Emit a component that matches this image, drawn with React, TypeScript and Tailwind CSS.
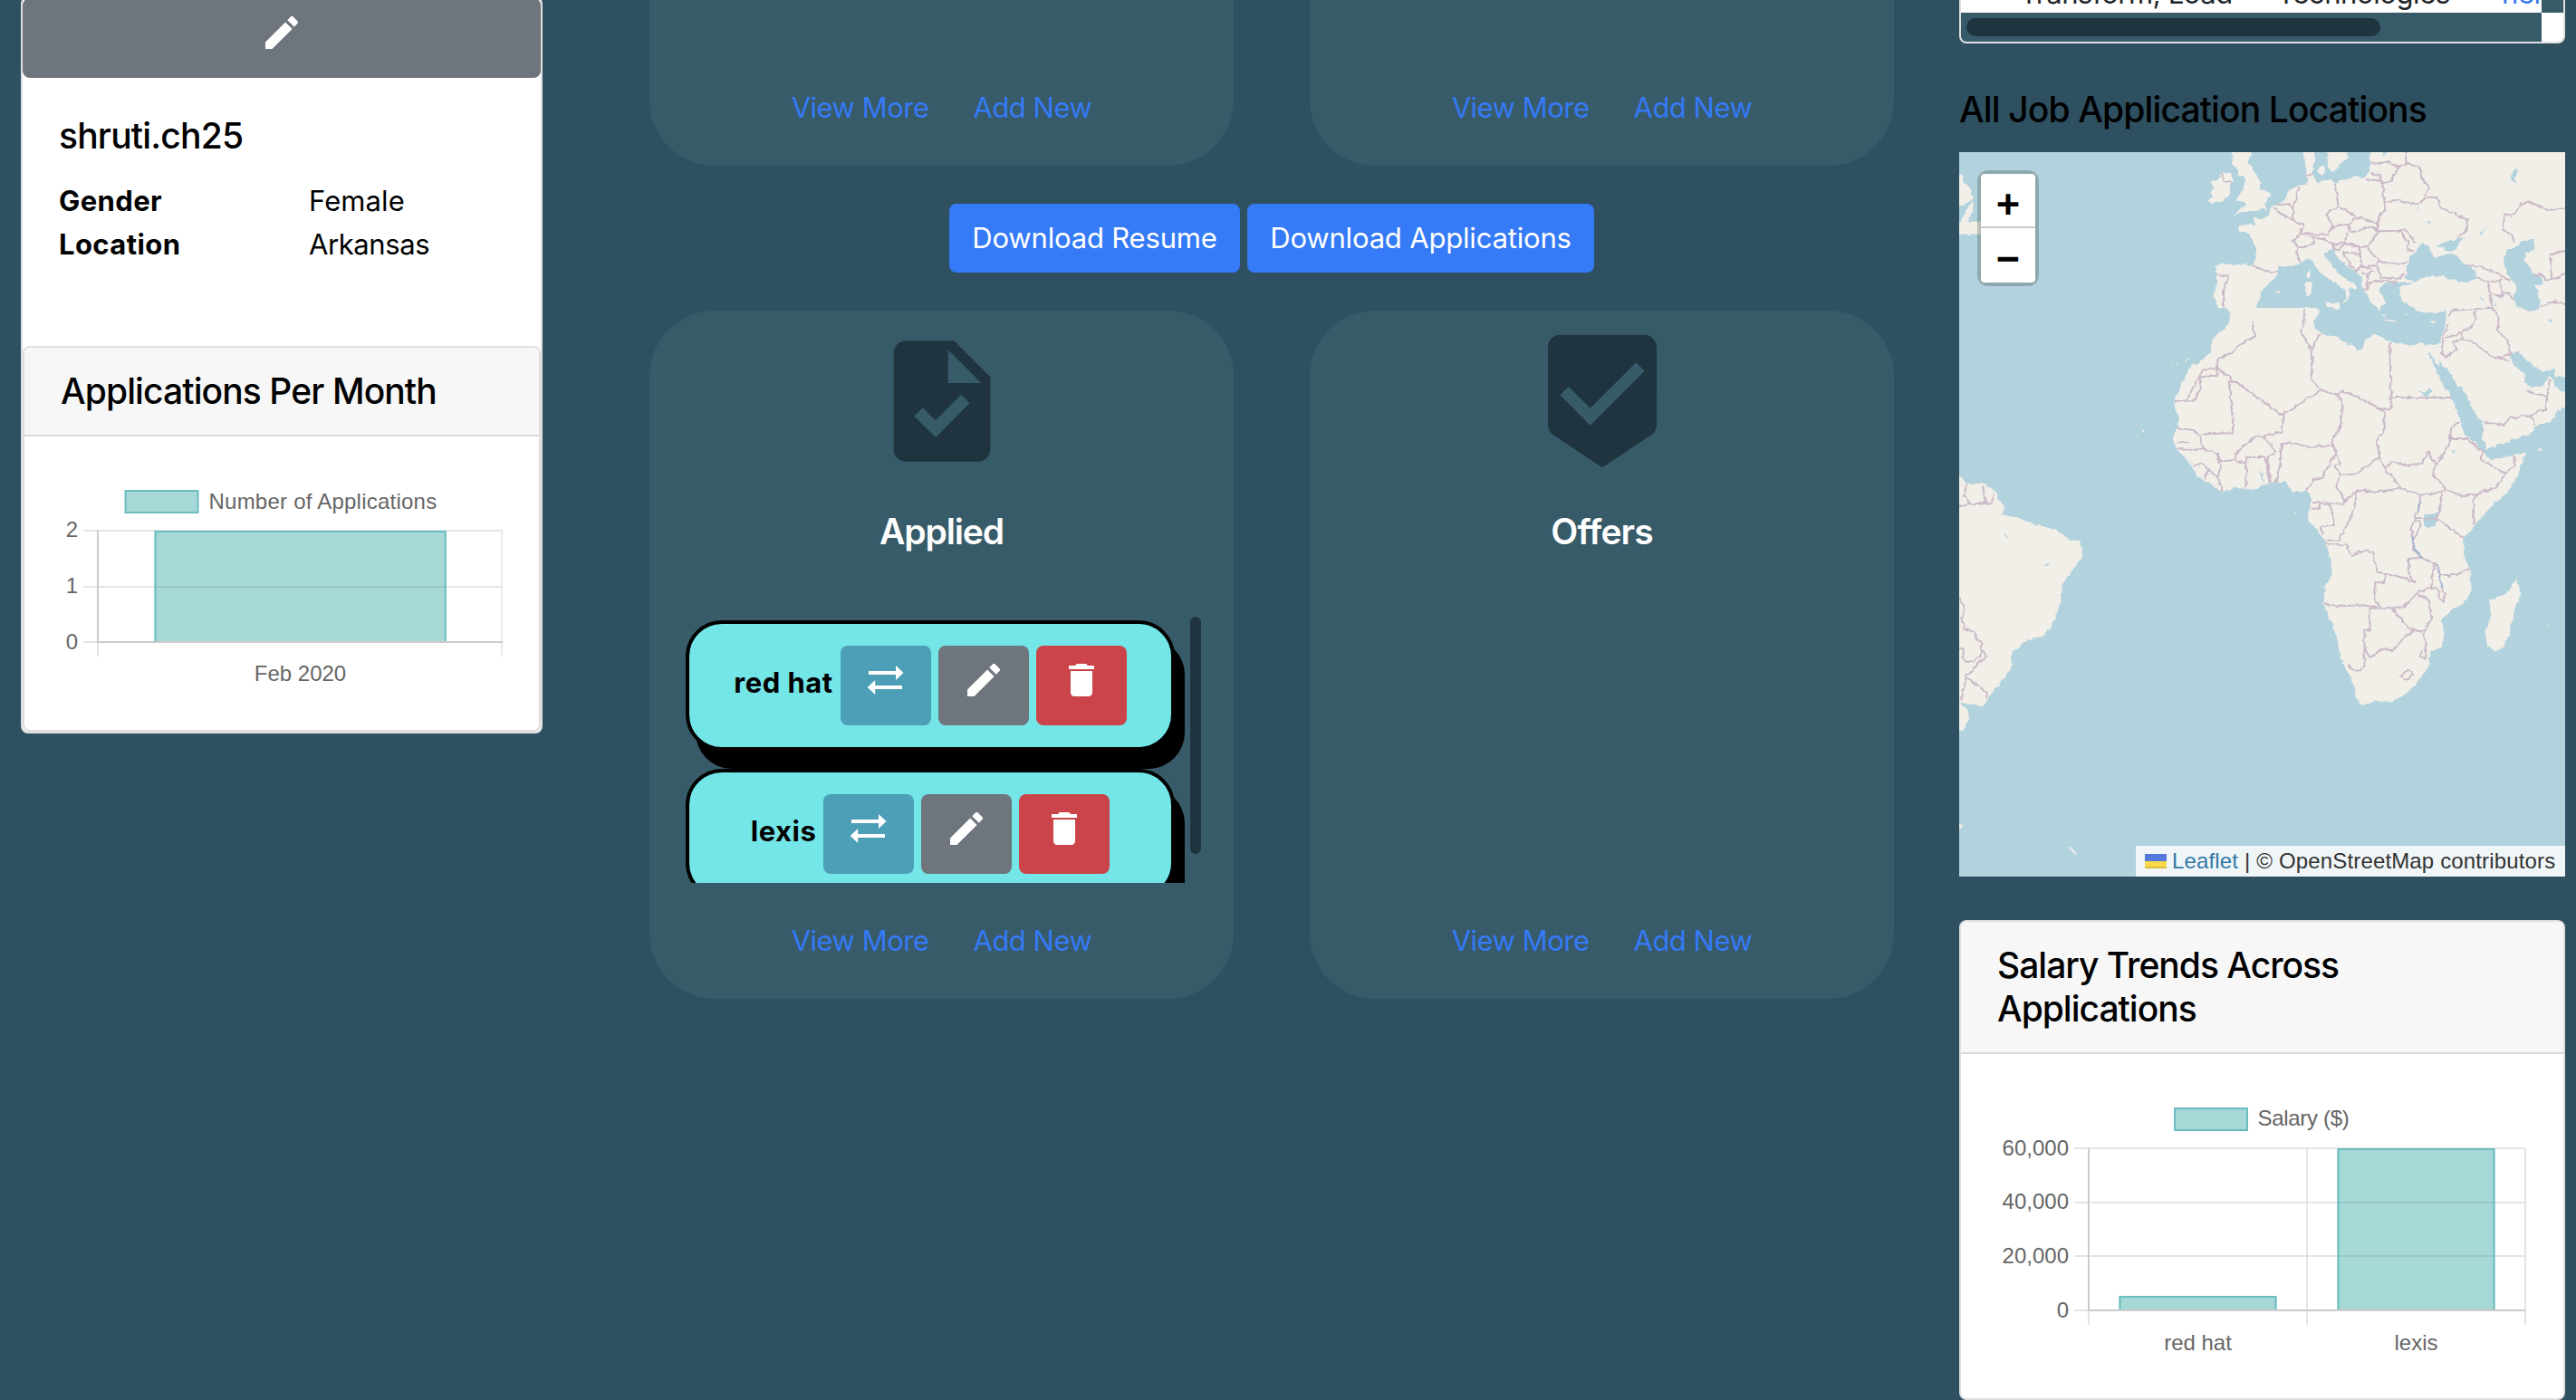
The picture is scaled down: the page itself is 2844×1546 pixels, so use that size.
import React from "react";
import { MdBeenhere, MdDelete, MdEdit, MdTask } from "react-icons/md";

function SwapIcon() {
  return (
    <svg viewBox="0 0 48 48" className="size-12 fill-white">
      <path d="M5 14H35V8L43.5 16 35 24V18H5Z" />
      <path d="M42 30H12.2V24L3.7 32 12.2 40V34H42Z" />
    </svg>
  );
}

function CardLinks() {
  return (
    <div className="flex justify-center gap-[49px] text-[31px] leading-[48px] tracking-[-0.5px] text-[#357af6]">
      <a>View More</a>
      <a>Add New</a>
    </div>
  );
}

function JobItem({ name }: { name: string }) {
  return (
    <div className="mb-5 flex h-36 w-[540px] items-start justify-center gap-2 rounded-[40px] border-4 border-black bg-[#74e6e8] pt-6 shadow-[11px_20px_0_0_#000]">
      <span className="pt-[17px] text-[31px] font-bold leading-[48px] tracking-[0.5px]">{name}</span>
      <button className="flex h-[88px] w-[100px] justify-center rounded-lg bg-[#4c9fb6] pt-[14px]">
        <SwapIcon />
      </button>
      <button className="flex h-[88px] w-[100px] justify-center rounded-lg bg-[#6e757d] pt-[14px] text-white">
        <MdEdit className="size-12" />
      </button>
      <button className="flex h-[88px] w-[100px] justify-center rounded-lg bg-[#ca444a] pt-[14px] text-white">
        <MdDelete className="size-12" />
      </button>
    </div>
  );
}

const chartText = "fill-[#666666] font-['Liberation_Sans',Arial,sans-serif] text-[24px]";

function ApplicationsChart() {
  return (
    <svg viewBox="0 0 568 324" className="block h-[324px] w-[568px]">
      <rect x="111.5" y="60" width="80" height="24" fill="#a6d8d7" stroke="#6cbdbf" strokeWidth="2" />
      <text x="203.5" y="79.5" letterSpacing="0.23" className={chartText}>Number of Applications</text>
      <g fill="#e4e4e4">
        <rect x="65" y="103" width="463" height="2" />
        <rect x="65" y="165" width="463" height="2" />
        <rect x="65" y="226" width="16" height="2" />
        <rect x="526.5" y="104" width="1.5" height="139" />
        <rect x="80" y="228" width="2" height="15" />
      </g>
      <rect x="143.5" y="104" width="322" height="123" fill="#a6d8d7" />
      <rect x="143.5" y="165" width="322" height="2" fill="#96c7c6" />
      <path d="M144.5 227V105H464.8V227" fill="none" stroke="#6cbdbf" strokeWidth="2" />
      <rect x="80" y="104" width="2" height="124" fill="#cccccc" />
      <rect x="80" y="226" width="448" height="2" fill="#cccccc" />
      <g textAnchor="end" className={chartText}>
        <text x="59" y="111">2</text>
        <text x="59" y="173">1</text>
        <text x="59" y="235">0</text>
      </g>
      <text x="304.5" y="270" textAnchor="middle" className={chartText}>Feb 2020</text>
    </svg>
  );
}

function SalaryChart() {
  return (
    <svg viewBox="0 0 665 380" className="block h-[380px] w-[665px]">
      <rect x="236" y="60" width="80" height="24" fill="#a6d8d7" stroke="#6cbdbf" strokeWidth="2" />
      <text x="327.5" y="79" letterSpacing="-0.3" className={chartText}>Salary ($)</text>
      <g fill="#e4e4e4">
        <rect x="125" y="103" width="498" height="2" />
        <rect x="125" y="163" width="498" height="2" />
        <rect x="125" y="222" width="498" height="2" />
        <rect x="125" y="282" width="16" height="2" />
        <rect x="622" y="104" width="2" height="195" />
        <rect x="381" y="104" width="2" height="195" />
        <rect x="140" y="284" width="2" height="15" />
      </g>
      <rect x="174.5" y="267" width="174" height="16" fill="#a6d8d7" />
      <path d="M175.5 283V268H347.5V283" fill="none" stroke="#6cbdbf" strokeWidth="2" />
      <rect x="415.5" y="104" width="174" height="179" fill="#a6d8d7" />
      <rect x="415.5" y="163" width="174" height="2" fill="#96c7c6" />
      <rect x="415.5" y="222" width="174" height="2" fill="#96c7c6" />
      <path d="M416.5 283V105H588.5V283" fill="none" stroke="#6cbdbf" strokeWidth="2" />
      <rect x="140" y="104" width="2" height="180" fill="#cccccc" />
      <rect x="140" y="282" width="483" height="2" fill="#cccccc" />
      <g textAnchor="end" className={chartText}>
        <text x="119" y="111.5">60,000</text>
        <text x="119" y="170.5">40,000</text>
        <text x="119" y="230.5">20,000</text>
        <text x="119" y="290.5">0</text>
      </g>
      <g textAnchor="middle" className={chartText}>
        <text x="261.5" y="326.5">red hat</text>
        <text x="502.5" y="326.5">lexis</text>
      </g>
    </svg>
  );
}

const north = "translate(237 0) scale(.33333)";
const south = "translate(-42.94 182) scale(.4617 .33333)";

function WorldMap() {
  return (
    <svg viewBox="0 0 669 800" className="block h-[800px] w-[669px] bg-[#b2d2dd]">
      <defs>
        <filter id="coast" filterUnits="userSpaceOnUse" x="-10" y="-10" width="690" height="820">
          <feTurbulence type="fractalNoise" baseFrequency="0.16" numOctaves="2" seed="4" />
          <feDisplacementMap in="SourceGraphic" scale="5" xChannelSelector="R" yChannelSelector="G" />
          <feGaussianBlur stdDeviation="0.4" />
        </filter>
      </defs>
      <g filter="url(#coast)">
        <g fill="#f2efe9">
          <g transform={north}>
            <path d="M655-30L650 35 645 65 632 85 600 78 560 92 535 105 520 90 500 95 475 102 465 85 455 75 465 55 460 40 470 28 465 10 470-30 437-30 430 15 438 45 440 75 445 92 438 108 412 110 385 125 372 135 370 155 345 175 320 185 315 208 290 222 265 222 268 242 235 238 213 250 220 262 250 275 270 310 270 345 262 375 200 372 155 370 135 380 142 405 140 445 130 478 140 490 142 515 165 517 185 525 195 542 205 532 250 523 270 515 285 490 292 460 320 430 345 405 350 378 390 380 420 368 445 352 462 365 475 390 510 420 545 440 568 460 572 480 560 505 572 495 583 470 575 450 605 452 600 440 560 415 530 385 510 360 500 340 510 322 525 325 545 350 570 375 600 395 620 412 625 440 635 465 655 500 680 525 685 512 705 500 690 475 680 450 700 435 740 432 765 430 775 432 760 440 745 450 755 490 790 520 820 530 860 535 905 522 905 555 890 600 878 640 845 640 820 632 790 642 745 632 715 628 690 612 660 605 635 620 632 650 615 657 590 640 560 630 545 612 490 602 468 585 462 560 475 545 480 522 455 515 430 522 400 518 345 522 300 535 260 560 225 555 200 548 190 555 175 580 135 610 122 650 125 665 100 695 60 705 40 740 20 780H1330V-30Z" />
            <path d="M185-30L195 25 190 40 215 60 212 72 240 85 235 115 225 130 205 160 230 165 240 178 222 185 196 208 245 195 310 187 298 175 320 145 310 130 290 125 285 95 265 60 245 40 255 15 260-30Z" />
            <path d="M160 65L190 70 195 95 185 110 187 145 160 160 125 172 116 155 130 150 122 130 135 120 120 98 150 88Z" />
            <path d="M500-30L510 30 515 60 540 62 548 40 575 20 580-30ZM478 50L495 42 502 60 492 78 475 65Z" />
            <path d="M435 432L455 428 455 470 440 477ZM440 395L452 390 450 422 440 415ZM503 497L550 500 545 524 505 507ZM695 550L738 558 735 562 697 558ZM845 562L875 556 860 569ZM335 462L348 458 346 468ZM690 540l10 0 0 6zM765 530l7 8 -5 3z" />
          </g>
          <g transform={south}>
            <path d="M745-30L735 30 705 60 697 115 660 155 640 195 610 265 606 285 618 320 615 370 603 400 615 440 650 490 660 525 700 560 722 578 760 565 795 572 840 548 872 545 890 580 925 575 938 605 930 640 927 675 950 710 970 745 980 800 985 850 968 900 962 950 980 1000 995 1055 1005 1130 1020 1170 1040 1230 1040 1262 1060 1290 1090 1272 1125 1275 1155 1255 1190 1210 1215 1160 1220 1110 1250 1090 1253 1050 1245 1005 1270 970 1300 950 1318 910 1315 840 1303 800 1297 740 1325 690 1370 620 1405 580 1430 520 1447 450 1400 465 1365 475 1350 455 1325 415 1300 385 1290 330 1270 270 1250 200 1235 160 1217 115 1243 150 1240 95 1200 88 1170 98 1125 82 1090 60 1065 75 1060 105 1050 110 1010 90 1000 68 950 50 940 30 950-30Z" />
            <path d="M1258-30L1255 50 1240 120 1247 140 1260 155 1280 210 1300 245 1325 315 1345 350 1345 400 1355 437 1400 415 1460 385 1475 360 1510 345 1525 310 1560 290V-30Z" />
            <path d="M60 505L93 525 110 552 150 552 185 580 187 605 202 630 195 655 235 665 268 685 325 705 360 740 382 745 388 785 375 820 340 880 337 930 325 990 312 1030 295 1055 250 1075 220 1110 218 1160 200 1200 175 1240 150 1290 125 1285 95 1275 110 1300 118 1330 105 1365 60 1380Z" />
            <path d="M1425 865L1437 915 1425 950 1410 1030 1398 1095 1375 1107 1357 1090 1350 1040 1365 990 1360 940 1395 920 1415 895Z" />
            <path d="M350 1755l15 5 10 25 -5-5zM90 1678l14 5 -6 12 -8 0zM598 148l4 0 0 10zM612 155l5 0 0 6zM632 150l4-14 5-5 0 8zM505 355l4 5zM515 395l6 0 -2 6zM530 375l6 0 -2 6zM1478 437l7 0 0 6 -6 0zM1498 1020l6 0 0 8zM892 648l6 0 0 6z" />
            <path d="M60-490L93-472 110-440 130-400 125-385 60-350ZM60-280L93-310 125-385 130-375 112-310 145-320 150-270 93-275Z" />
          </g>
        </g>
        <g fill="#b2d2dd">
          <g transform={north}>
            <path d="M768 420L770 385 785 345 805 330 820 298 845 310 850 325 865 350 900 338 920 335 945 350 970 372 1000 395 1000 418 970 432 930 425 890 410 850 412 800 428Z" />
            <path d="M870 308L920 292 962 284 940 310 935 328 912 332 890 318ZM752 438L790 432 780 443Z" />
            <path d="M1092 350L1105 322 1130 318 1160 290 1195 292 1195 320 1165 335 1160 360 1190 400 1215 410 1225 435 1195 440 1210 475 1212 520 1175 528 1130 505 1125 480 1135 445 1105 405Z" />
            <path d="M1115 85l15-35 12 10 -15 25 10 25zM1010 275l20-25 -5 18zM835 225l22 10 -10 3zM1240 552l16 6 -12 6zM685-5l20 0 -8 14zM808 175l5 12 -5 8zM1015 482l14 0 -6 8zM1062 490l8 20 -4 2z" />
            <path d="M842 665L850 668 880 715 880 690 890 705 915 730 945 790 900 790Z" />
            <path d="M680 450L705 438 740 436 742 455 752 490 770 512 720 522 705 500 690 475Z" />
          </g>
          <g transform={south}>
            <path d="M1408 125L1430 112 1450 145 1490 182 1515 170 1520 195 1560 205V262L1520 235 1508 192 1490 225 1460 235 1445 215 1445 190 1420 160Z" />
            <path d="M1205 655L1240 650 1232 694 1207 697ZM808 505l12 15 0 28 -6-25zM1190 243l18 10 10-18 6 12 -14 20zM1270 443l10 0 -2 10z" />
            <path d="M200 720l10 10 -4 6zM292 825l20-14 -4 12zM175 1240l18-30 -8 28z" />
          </g>
        </g>
        <g fill="none" stroke="#cbbac8" strokeWidth="2" strokeLinejoin="round">
          <g transform={north}>
            <path vectorEffect="non-scaling-stroke" d="M142 405L180 412 165 460 165 515M258 378L300 392 345 400M335 185L360 210 395 225 430 240 420 270 395 295 410 315 408 345 420 365M345 175L375 172 395 185 395 225M412 115L405 150 392 190M533 105L545 180 505 205 525 245 510 272 420 270M545 180L605 215 580 240 525 245M605 215L675 235 680 215 700 190 690 95 635 90M580 240L585 268 650 248 675 255 675 235M575 265L570 300 615 318 645 308 680 262 650 248M450 280L500 290 530 305 570 300M510 272L530 245M410 315L440 315 465 300 455 280M525 305L530 325 548 328 565 300M560 332L615 335 622 375 605 395 580 370ZM615 318L622 375 640 385 670 370 680 355 650 330 645 308M680 262L750 260 765 255 800 300M750 260L775 300 775 325 795 328M680 362L720 370 775 365M670 370L685 415 740 420 765 405M635 460L645 435 685 425 740 432M622 400L640 405 640 440M640 385L660 395 640 405M700 165L740 158 805 175 835 150 870 150 885 185 975 225 970 260 940 285M690 105L720 95 745 50 770 38 815 50 820 85 845 115 830 145M655 38L715 33 745 50M650 70L680 75 685 92M770 38L765-20M1128 300L1120 275 1088 255 1098 205 1120 210 1150 170 1185 165 1240 195 1310 183M1310 326L1248 338 1248 420 1270 418 1310 392M1190 410L1215 405 1235 422 1248 420M1215 512L1260 495 1310 508M970 375L1020 380 1075 405 1115 425M1000 418L1060 430 1090 420M1040 430L1045 460 1080 480 1110 465 1125 490M1075 430L1090 475 1065 475M1045 460L1055 515 920 525 910 545M1055 515L1080 550 1070 590 1105 625 1115 665 1090 680 1055 680 1000 635 960 620 950 600 900 615M950 600L995 570 1000 525M960 620L925 630 938 655 905 678 885 670 895 600 912 570M1055 680L1110 690M258 560L270 610 230 630 190 665 145 685 145 740M432 522L430 570 420 590 455 655 458 735M487 603L462 640 455 655M715 630L718 780M160 66L162 98 190 100M438 75L460 75" />
          </g>
          <g transform={south}>
            <path vectorEffect="non-scaling-stroke" d="M710 165V195L670 195 668 240 655 278 608 278M710 170L675 178 635 278M710 170L850 310 860 322 870 320 960 243 940 215 935 195 937 130M755 212L738 212 750 385 680 388 668 395 655 375 615 370M870 320L865 380 820 395 805 395 760 440 750 475M668 395L678 440 615 435M615 418H645M678 440L710 450 718 478 750 475 780 485 778 565M780 485V465L825 465 835 550M820 395L850 445 830 465 838 548M862 445L862 480 850 548M862 450L865 420 895 418 930 432 985 425M960 243L1000 260 1010 295 1005 365 985 400 990 440 1005 490 990 490M1000 260L1010 243 1105 308 1125 303 1125 230M1125 267H1270M1110 308L1108 380 1092 410 1098 465 1040 520 1005 525 990 490M985 425L995 445 960 535 940 540 925 575M1005 525L995 560 1015 610 1010 620 940 615M935 635L955 635V615M980 620L992 690 960 695 960 720M1015 610L1045 575 1090 580 1150 568 1110 500 1098 465M1045 575L1035 650 1000 740 970 740M1110 500L1130 478 1160 492 1200 485 1215 445 1228 480 1235 485 1225 518 1258 572 1245 580 1195 590 1150 568M1235 485L1265 420 1270 365 1290 345M1265 405L1310 405 1345 450 1340 470 1400 520 1420 490 1420 460M1400 520L1375 568 1330 585 1300 595 1258 572M1330 585L1322 610 1325 685M1245 580L1245 625 1235 668 1300 732M1195 590L1195 625 1182 665 1235 668M1182 665L1175 700 1180 770 1200 798 1170 800 1168 855 1183 880 1165 868 1115 850 1112 878 1088 880 1088 940 1100 960M972 753L1018 755 1032 790 1070 772 1083 780 1092 845 1115 850M1200 798L1235 820 1245 855 1280 855 1313 835M1228 820L1222 895 1190 912 1155 960 1100 965 1075 965 1075 1035 1062 1040V1160L1045 1173 1022 1155M965 948L990 958 1060 955 1100 965M1130 965L1155 1010 1180 1040 1205 1040 1222 1000 1218 940 1190 920M1222 895L1240 905 1240 930 1250 945 1255 915 1245 895M1062 1095L1075 1130 1105 1100 1130 1105 1150 1070 1180 1040M1205 1040L1210 1130 1195 1125 1200 1105M1150 1190L1165 1167 1178 1180 1162 1205ZM1182 675L1195 680 1192 705 1180 735M655 495L670 482 690 505 680 535M690 510L712 530 722 575M710 450L718 500 712 530M1450 240L1470 255 1500 260 1505 205M1500 260L1495 305 1458 325 1410 335 1395 357 1348 350M1458 325L1470 362M80 632L120 620 105 590 110 555M120 620L155 615 150 560M155 615L170 618 178 585M95 930L105 970 98 1000 105 1030 130 1045 135 1075 148 1080 145 1120 125 1143 100 1135 105 1105 85 1092M148 1105L157 1125 110 1190 98 1270M112 1195L160 1245 158 1265" />
            <path vectorEffect="non-scaling-stroke" stroke="#9fb4d3" d="M1177 725L1185 770 1198 800M1235 820L1248 895M1198 615L1190 635M1168 800V815" />
          </g>
        </g>
      </g>
    </svg>
  );
}

export default function App() {
  return (
    <div className="flex h-[1546px] w-[2844px] overflow-hidden bg-[#2e5060] font-['Inter',sans-serif] text-black">
      <aside className="-mt-1 ml-[23px] h-[814px] w-[576px] overflow-hidden rounded-lg border-2 border-[#dfdfdf] bg-white">
        <button className="flex h-[88px] w-full justify-center rounded-lg bg-[#6e757d] pt-[14px] text-white">
          <MdEdit className="size-12" />
        </button>
        <div className="h-[296px] px-10 pt-10">
          <h5 className="text-[39px] font-[550] leading-[48px] tracking-[-0.8px]">shruti.ch25</h5>
          <dl className="mt-6 grid grid-cols-[276px_1fr] text-[31px] leading-[48px]">
            <dt className="font-bold tracking-[0.4px]">Gender</dt>
            <dd className="tracking-[0.1px]">Female</dd>
            <dt className="font-bold tracking-[0.4px]">Location</dt>
            <dd className="tracking-[-0.4px]">Arkansas</dd>
          </dl>
        </div>
        <section className="h-[426px] overflow-hidden rounded-lg border-2 border-[#dfdfdf]">
          <h5 className="h-[98px] border-b-2 border-[#d9d9d9] bg-[#f7f7f7] px-10 pt-6 text-[39px] font-[550] leading-[48px] tracking-[-0.9px]">
            Applications Per Month
          </h5>
          <ApplicationsChart />
        </section>
      </aside>

      <main className="ml-[118px] w-[1374px]">
        <div className="flex gap-[84px]">
          <div className="h-[183px] w-[645px] rounded-b-[72px] bg-[#375b69] pt-[95px]"><CardLinks /></div>
          <div className="h-[183px] w-[645px] rounded-b-[72px] bg-[#375b69] pt-[95px]"><CardLinks /></div>
        </div>
        <div className="flex h-40 items-center justify-center gap-2 text-[31px] leading-[48px] tracking-[-0.18px] text-white">
          <button className="h-[76px] w-[321px] whitespace-nowrap rounded-lg bg-[#357af6]">Download Resume</button>
          <button className="h-[76px] w-[383px] whitespace-nowrap rounded-lg bg-[#357af6]">Download Applications</button>
        </div>
        <div className="flex gap-[84px]">
          <section className="h-[760px] w-[645px] rounded-[72px] bg-[#375b69] pt-5">
            <MdTask className="mx-auto size-40 text-[#1f343f]" />
            <h5 className="mt-10 text-center text-[39px] font-semibold leading-[48px] tracking-[-1.1px] text-white">Applied</h5>
            <div className="mt-[66px] flex h-[298px] justify-between pl-9 pr-9">
              <div className="w-[555px] overflow-hidden pl-1 pt-2">
                <JobItem name="red hat" />
                <JobItem name="lexis" />
              </div>
              <div className="mt-1 h-[262px] w-3 rounded-full bg-[#1f343f]" />
            </div>
            <div className="mt-10"><CardLinks /></div>
          </section>
          <section className="h-[760px] w-[645px] rounded-[72px] bg-[#375b69] pt-5">
            <MdBeenhere className="mx-auto size-40 text-[#1f343f]" />
            <h5 className="mt-10 text-center text-[39px] font-semibold leading-[48px] tracking-[-0.9px] text-white">Offers</h5>
            <div className="mt-[404px]"><CardLinks /></div>
          </section>
        </div>
      </main>

      <aside className="ml-[72px] w-[669px]">
        <div className="h-12 overflow-hidden rounded-b-lg border-2 border-t-0 border-[#dfdfdf] bg-white">
          <div className="flex h-[14px] bg-[#375b69]">
            <div className="flex h-[14px] w-[641px] overflow-hidden whitespace-nowrap bg-white pl-[65px] text-[31px] leading-[48px] tracking-[-0.4px] text-[#212529]">
              <span className="-mt-[31px] w-[284px] shrink-0">Transform, Load</span>
              <span className="-mt-[31px] w-[248px] shrink-0">Technologies</span>
              <a className="-mt-[31px] text-[#357af6]">here</a>
            </div>
          </div>
          <div className="h-8 w-[641px] bg-[#375b69] pl-[6px] pt-[6px]">
            <div className="h-5 w-[457px] rounded-full bg-[#1f343f]" />
          </div>
        </div>
        <h5 className="mb-[23px] mt-[49px] whitespace-nowrap text-[39px] font-[550] leading-[48px] tracking-[-0.87px]">All Job Application Locations</h5>
        <div className="relative h-[800px] overflow-hidden">
          <WorldMap />
          <div className="absolute left-5 top-5 w-[68px] rounded-xl border-4 border-black/20 bg-clip-padding font-['Liberation_Mono',monospace] text-[45px] font-bold">
            <div className="h-[60px] rounded-t-[4px] border-b-2 border-[#cccccc] bg-white text-center leading-[75px]">+</div>
            <div className="h-[60px] rounded-b-[4px] bg-white text-center leading-[75px]">−</div>
          </div>
          <div className="absolute bottom-0 right-0 flex h-[34px] w-[474px] items-center whitespace-nowrap bg-white/80 pl-[10px] font-['Liberation_Sans',Arial,sans-serif] text-[24px] leading-[34px] tracking-[0.15px] text-[#333333]">
            <svg viewBox="0 0 12 8" className="mr-[6px] h-4 w-6">
              <path fill="#5478db" d="M0 0h12v4H0z" />
              <path fill="#f9d84a" d="M0 4h12v3H0z" />
              <path fill="#ddbd3f" d="M0 7h12v1H0z" />
            </svg>
            <span className="text-[#3278a6]">Leaflet</span>
            <span className="ml-[7px]">| © OpenStreetMap contributors</span>
          </div>
        </div>
        <section className="mt-12 h-[530px] overflow-hidden rounded-lg border-2 border-[#dfdfdf] bg-white">
          <h5 className="h-[146px] border-b-2 border-[#d9d9d9] bg-[#f7f7f7] px-10 pt-6 text-[39px] font-[550] leading-[48px] tracking-[-1px]">
            Salary Trends Across
            <br />
            Applications
          </h5>
          <SalaryChart />
        </section>
      </aside>
    </div>
  );
}
